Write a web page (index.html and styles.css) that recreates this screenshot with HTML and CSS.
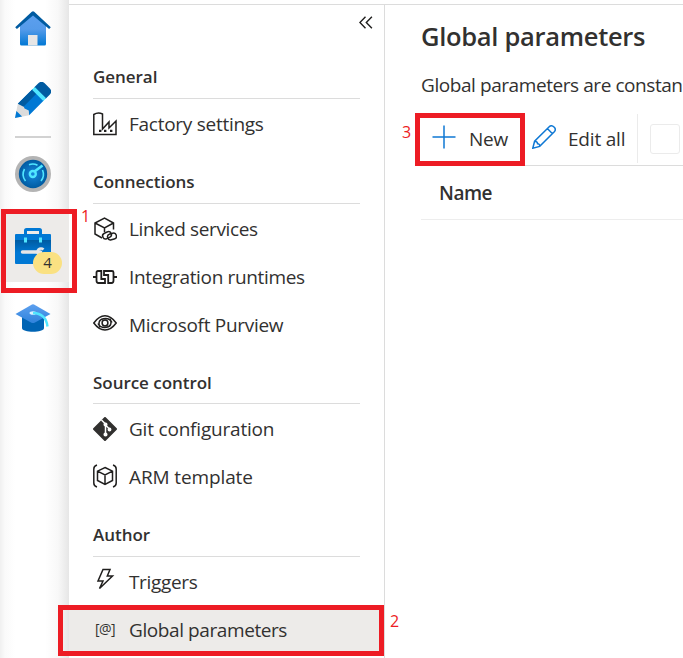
FILE: index.html
```html
<!DOCTYPE html>
<html lang="en">
<head>
<meta charset="utf-8">
<title>Global parameters</title>
<link rel="stylesheet" href="styles.css">
</head>
<body>
<div class="app">
  <nav class="rail">
    <a class="rail-item home"><svg width="36" height="36" viewBox="0 0 36 36"><defs><linearGradient id="hg" x1="0" y1="0" x2="0" y2="1"><stop offset="0" stop-color="#5ea0ef"/><stop offset=".5" stop-color="#559bea"/><stop offset="1" stop-color="#0078d4"/></linearGradient></defs><path d="M18 2 5 14v19q0 1.500 1.500 1.500h23q1.500 0 1.500-1.500V14z" fill="url(#hg)"/><path d="M.2 16.200 16.800.7q1.200-1.100 2.400 0L35.800 16.200l-1.700 1.800L18 4.500 1.900 18z" fill="#005ba1"/><path d="M13 24h9.500v10.500H13z" fill="#e6e6e6"/></svg></a>
    <a class="rail-item author"><svg width="36" height="36" viewBox="0 0 36 36"><g transform="translate(0 36) rotate(-45)"><path d="M0 0 12-8l4 4-1 4 1 4-4 4z" fill="#dcdcdc"/><path d="M0 0 6-4V4z" fill="#0078d4"/><path d="M12-8h21V8H12l3-3.500L13.500 0 15-3.500z" fill="#0078d4"/><path d="M12-8h21v6H14z" fill="#005ba1"/><path d="M35-8h6q4.500 0 4.500 4.500v7Q45.500 8 41 8h-6z" fill="#005ba1"/><path d="M32-8h4V8h-4z" fill="#50e6ff"/></g></svg></a>
    <hr class="rail-line">
    <a class="rail-item monitor"><svg width="36" height="36" viewBox="0 0 36 36"><defs><radialGradient id="mg"><stop offset="0" stop-color="#1686dc"/><stop offset="1" stop-color="#005ba1"/></radialGradient></defs><circle cx="18" cy="18" r="18" fill="#b4b4b4"/><circle cx="18" cy="18" r="14.200" fill="url(#mg)"/><g fill="none" stroke="#50e6ff" stroke-width="1.600"><path d="M9.500 13a11 11 0 0 0 1 12M14 8.800a10 10 0 0 1 8.500.500M27.500 14a11 11 0 0 1-1.500 11"/><circle cx="17.800" cy="18" r="3" stroke-width="2.400"/><path d="m19.500 15.500 8-6" stroke-width="2.800"/></g></svg></a>
    <a class="rail-item manage"><svg width="36" height="36" viewBox="0 0 36 36"><defs><linearGradient id="tg" x1="0" y1="0" x2="0" y2="1"><stop offset="0" stop-color="#005ba1"/><stop offset="1" stop-color="#0078d4"/></linearGradient></defs><path d="M10.500 7V2.500q0-1 1-1h13q1 0 1 1V7" fill="none" stroke="#0078d4" stroke-width="3"/><rect y="6" width="36" height="30" rx="1" fill="#0078d4"/><path d="M0 12h36v13H0z" fill="url(#tg)"/><path d="M9 9.500h3v5H9zm15 0h3v5h-3z" fill="#50e6ff"/><path d="M7.500 24h18" stroke="#e6e6e6" stroke-width="3.500" stroke-linecap="round"/><path d="M28.500 21.500a3.500 3.500 0 1 0 0 5" fill="none" stroke="#e6e6e6" stroke-width="2.600"/></svg><span class="badge">4</span></a>
    <a class="rail-item learn"><svg width="36" height="36" viewBox="0 0 36 36"><defs><linearGradient id="cg" x1="0" y1="0" x2="0" y2="1"><stop offset="0" stop-color="#5ea0ef"/><stop offset="1" stop-color="#2f83dc"/></linearGradient></defs><path d="M7 15v12c0 5 22 5 22 0V15z" fill="#0064b4"/><path d="M.5 13 17 3.500q1-.5 2 0L35.500 13 20 21.500q-2 1-4 0z" fill="url(#cg)"/><ellipse cx="18" cy="12" rx="3.500" ry="1.800" fill="#d9f3ff"/><path d="M18 12q13 .5 14.500 13.500" fill="none" stroke="#50e6ff" stroke-width="2.400"/></svg></a>
  </nav>

  <aside class="panel">
    <button class="collapse" aria-label="Collapse"><svg width="14" height="13" viewBox="0 0 14 13"><path d="M6.500.7.9 6.500l5.600 5.800M12.900.7 7.300 6.500l5.600 5.800" fill="none" stroke="#201f1e" stroke-width="1.400"/></svg></button>

    <h2 class="group">General</h2>
    <a class="item"><svg class="icon" viewBox="0 0 24 24"><path d="M.8 22.500V2.500Q5 0 9.500 2V17l6.500-7v6l7-7v13.500z"/><path d="M6 18.800h2.400m2.600 0h2.400m3.600 0h2.400" stroke-width="2.200"/></svg><span class="t-factory">Factory settings</span></a>

    <h2 class="group">Connections</h2>
    <a class="item"><svg class="icon" viewBox="0 0 24 24"><path d="M20.500 12.500V6L11.500 1.200 2 6v11l7 4M2 6l9.500 5L20.500 6M11.500 11v4"/><rect x="9.500" y="15.300" width="9" height="6" rx="3" transform="rotate(-25 14 18.300)"/><rect x="14.500" y="16.500" width="9" height="6" rx="3" transform="rotate(-15 19 19.500)"/></svg><span class="t-linked">Linked services</span></a>
    <a class="item"><svg class="icon runtime" viewBox="0 0 24 24"><path d="M0 12h3.500m17 0H24M8.300 6H5Q3.500 6 3.500 7.500v8Q3.500 18 5.500 18H12v-4H8.300zM11 6h8q1.500 0 1.500 1.500v8q0 2.500-2 2.500h-3.300v-8H11z"/></svg><span class="t-integration">Integration runtimes</span></a>
    <a class="item"><svg class="icon purview" viewBox="0 0 24 24"><path d="M.8 12Q6 4.800 12 4.800T23.200 12Q18 19 12 19T.8 12z"/><circle cx="12" cy="12" r="2.900"/><path d="M7 16.500Q3.500 8 12.500 7.500q4.500 0 6.500 4M17 7.500q3.500 8.500-5.500 9-4.500 0-6.500-4"/></svg><span class="t-purview">Microsoft Purview</span></a>

    <h2 class="group short">Source control</h2>
    <a class="item"><svg class="icon" viewBox="0 0 24 24"><path d="m12 1 11 11-11 11L1 12z" fill="#323130" stroke="#323130" stroke-width="2" stroke-linejoin="round"/><g stroke="#fff"><path d="m8.500 3 4 4v11M12.500 8l4 4" stroke-width="1.500"/><g fill="#fff"><circle cx="12.500" cy="7.500" r="1.300"/><circle cx="12.500" cy="17.500" r="1.300"/><circle cx="16.500" cy="12.500" r="1.200"/></g></g></svg><span class="t-git">Git configuration</span></a>
    <a class="item"><svg class="icon arm" viewBox="0 0 24 24"><path d="M4 1Q.8 2 .8 5v14q0 3 3.200 4M20 1q3.200 1 3.200 4v14q0 3-3.200 4M12 3.500l7.500 3.700v9.300L12 20.500l-7.500-4V7.200zM4.500 7.200 12 11l7.500-3.800M12 11v9.500"/></svg><span class="t-arm">ARM template</span></a>

    <h2 class="group">Author</h2>
    <a class="item"><svg class="icon bolt" viewBox="0 0 24 24"><path d="M10 2.500h7L14.300 9h5.200L6.500 21.500 10 14H5z"/></svg><span class="t-triggers">Triggers</span></a>
    <a class="item selected"><span class="param">[@]</span><span class="t-global">Global parameters</span></a>
  </aside>

  <main class="content">
    <h1>Global parameters</h1>
    <p class="desc">Global parameters are constan</p>
    <div class="toolbar">
      <button class="new"><svg width="24" height="24" viewBox="0 0 24 24"><path d="M12 .5v23M.5 12h23" stroke="#0f78d4" stroke-width="1.500"/></svg><span>New</span></button>
      <button class="edit"><svg width="24" height="24" viewBox="0 0 24 24"><path d="m.8 23.200 1.800-7L17.200 1.700q2.300-2 4.800.3t.3 4.800L7.700 21.400zM2.600 16.200q3 .3 3 2.500 2.200 0 2.100 2.700M15.300 3.500l5.200 5.200" fill="none" stroke="#0f78d4" stroke-width="1.500"/></svg><span>Edit all</span></button>
      <div class="filter"><span class="box"></span></div>
    </div>
    <div class="thead">Name</div>
  </main>

  <div class="mark mark-1"></div><span class="num num-1">1</span>
  <div class="mark mark-2"></div><span class="num num-2">2</span>
  <div class="mark mark-3"></div><span class="num num-3">3</span>
</div>
</body>
</html>
```

FILE: styles.css
```css
* { box-sizing: border-box; }
body { margin: 0; background: #fff; color: #323130; font: 19px/24px "Open Sans", "Noto Sans", sans-serif; letter-spacing: -.2px; }
button { font: inherit; letter-spacing: inherit; color: inherit; background: none; border: 0; padding: 0; }
.app { position: relative; display: grid; grid-template-columns: 69px 316px 1fr; height: 658px; overflow: hidden; }
span { white-space: nowrap; }
svg { display: block; flex: none; }

.rail { display: flex; flex-direction: column; align-items: center; padding-top: 11px; background: linear-gradient(90deg, #f0f0f0, #fafafa 5px, #fff 15px, #fff 45px, #f8f8f8 58px, #e6e6e6); }
.rail-item { position: relative; width: 69px; height: 36px; padding-left: 15px; }
.author { margin-top: 35px; }
.rail-line { width: 36px; height: 2px; margin: 18px 0 18px -3px; border: 0; background: #d2d2d2; }
.manage { height: 72px; margin-top: 18px; padding-top: 18px; background: #edebe9; }
.learn { margin-top: 19px; }
.badge { position: absolute; left: 33px; top: 42px; width: 29px; height: 22px; border-radius: 11px; background: #fae182; font-size: 15px; line-height: 21px; text-align: center; }

.panel { display: flex; flex-direction: column; margin-top: 4px; border-top: 1px solid #dcdcdc; border-right: 1px solid #dcdcdc; }
.collapse { align-self: flex-end; width: 14px; height: 13px; margin: 11px 11px 14px 0; }
.group { flex: none; height: 56px; margin: 0 24px 1px; padding-top: 22px; border-bottom: 1px solid #dcdcdc; font-size: 17px; font-weight: 600; line-height: 24px; letter-spacing: -.04px; }
.group.short { height: 55px; }
.item { display: flex; flex: none; align-items: center; height: 48px; padding-left: 24px; gap: 12px; }
.icon { width: 24px; height: 24px; fill: none; stroke: #201f1e; stroke-width: 1.500; }
.runtime { stroke-width: 1.800; }
.purview { margin-top: -4px; }
.arm { margin-top: -2px; }
.bolt { margin-top: -6px; }
.t-factory { letter-spacing: -.27px; }
.t-linked { letter-spacing: -.36px; }
.t-integration { letter-spacing: -.34px; }
.t-purview { letter-spacing: -.3px; }
.t-arm { letter-spacing: -.12px; }
.t-triggers { letter-spacing: -.35px; }
.t-global { letter-spacing: -.41px; }
.selected { background: #edebe9; }
.param { width: 24px; font-size: 14px; line-height: 22px; padding-bottom: 2px; text-align: center; letter-spacing: -.6px; }

.content { display: flex; flex-direction: column; margin-top: 4px; padding-left: 36px; border-top: 1px solid #dcdcdc; overflow: hidden; }
h1 { margin: 13px 0 0; font-size: 25.5px; font-weight: 600; line-height: 36px; letter-spacing: -.3px; white-space: nowrap; }
.desc { margin: 19px 0 17px; letter-spacing: -.43px; white-space: nowrap; }
.toolbar { display: flex; height: 52px; border-bottom: 1px solid #dcdcdc; }
.toolbar button { display: flex; align-items: center; flex: none; }
.new { width: 111px; padding: 0 0 5px 11px; gap: 13px; }
.edit { width: 105px; gap: 12px; padding-bottom: 5px; }
.new span, .edit span { padding-top: 4px; }
.filter { flex: none; width: 46px; height: 49px; padding: 10px 0 0 12px; border-left: 1px solid #ebebeb; }
.box { display: block; width: 30px; height: 30px; border: 1px solid #ebebeb; border-radius: 3px; }
.thead { height: 54px; padding: 15px 0 0 18px; border-bottom: 1px solid #ededed; font-size: 19px; font-weight: 600; letter-spacing: -.5px; }

.mark { position: absolute; border: 5px solid #ed1c24; }
.mark-1 { left: 1px; top: 209px; width: 76px; height: 84px; }
.mark-2 { left: 58px; top: 605px; width: 326px; height: 51px; }
.mark-3 { left: 415px; top: 113px; width: 110px; height: 53px; }
.num { position: absolute; color: #ed1c24; font-size: 16px; line-height: 20px; }
.num-1 { left: 81px; top: 206px; }
.num-2 { left: 390px; top: 611px; }
.num-3 { left: 402px; top: 122px; }
```
